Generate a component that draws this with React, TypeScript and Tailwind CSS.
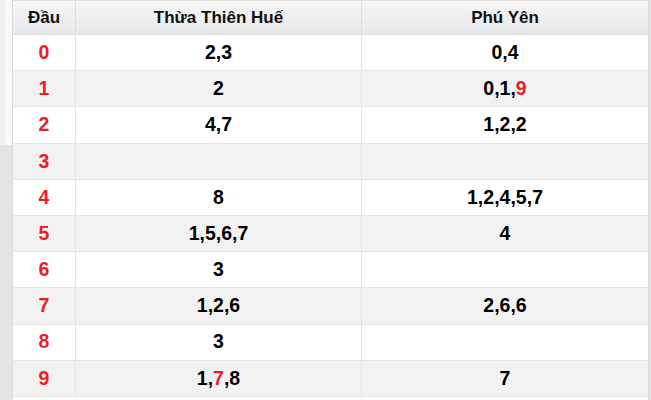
import React from "react";

type Cell = { v: string; red?: boolean };
type Row = { d: string; a: Cell[]; b: Cell[] };

const nums = (s: string, redIdx: number[] = []): Cell[] =>
  s === "" ? [] : s.split(",").map((v, i) => ({ v, red: redIdx.includes(i) }));

const rows: Row[] = [
  { d: "0", a: nums("2,3"), b: nums("0,4") },
  { d: "1", a: nums("2"), b: nums("0,1,9", [2]) },
  { d: "2", a: nums("4,7"), b: nums("1,2,2") },
  { d: "3", a: nums(""), b: nums("") },
  { d: "4", a: nums("8"), b: nums("1,2,4,5,7") },
  { d: "5", a: nums("1,5,6,7"), b: nums("4") },
  { d: "6", a: nums("3"), b: nums("") },
  { d: "7", a: nums("1,2,6"), b: nums("2,6,6") },
  { d: "8", a: nums("3"), b: nums("") },
  { d: "9", a: nums("1,7,8", [1]), b: nums("7") },
];

function Nums({ cells }: { cells: Cell[] }) {
  return (
    <span>
      {cells.map((c, i) => (
        <React.Fragment key={i}>
          {i > 0 && ","}
          <span className={c.red ? "text-[#ee1c25]" : ""}>{c.v}</span>
        </React.Fragment>
      ))}
    </span>
  );
}

export default function App() {
  return (
    <div
      className="w-[651px] h-[400px] flex bg-white overflow-hidden"
      style={{ fontFamily: '"Liberation Sans", Arial, sans-serif' }}
    >
      {/* left strip */}
      <div className="w-[12px] flex flex-col shrink-0">
        <div className="h-[145px] flex">
          <div className="w-[5px] bg-[#f1f1f1]" />
          <div className="flex-1 bg-[#f8f8f8]" />
        </div>
        <div className="flex-1 bg-[#e3e4e6]" />
      </div>

      {/* table */}
      <div className="w-[636px] shrink-0 flex flex-col border-l border-[#dcdcdc] bg-white">
        <div className="grid grid-cols-[63px_286px_286px] h-[35px] border-t border-b border-[#e2dfdb] bg-gradient-to-b from-[#f6f6f6] to-[#e7e8e9] text-[17px] font-bold text-[#111]">
          <div className="flex items-center justify-center border-r border-[#e0ddd9]">Đầu</div>
          <div className="flex items-center justify-center border-r border-[#e0ddd9]">Thừa Thiên Huế</div>
          <div className="flex items-center justify-center">Phú Yên</div>
        </div>
        {rows.map((r, i) => (
          <div
            key={r.d}
            className={
              "grid grid-cols-[63px_286px_286px] h-[36.2px] border-b border-[#e8e4df] text-[19.5px] font-bold text-black " +
              (i % 2 === 1 ? "bg-[#f2f2f2]" : "bg-white")
            }
          >
            <div className="flex items-center justify-center border-r border-[#e8e4df] text-[#ee1c25]">
              {r.d}
            </div>
            <div className="flex items-center justify-center border-r border-[#e8e4df]">
              <Nums cells={r.a} />
            </div>
            <div className="flex items-center justify-center">
              <Nums cells={r.b} />
            </div>
          </div>
        ))}
        <div className="flex-1 bg-white" />
      </div>

      {/* right strip */}
      <div className="flex-1 border-l border-[#d9d9d9] bg-[#e3e3e3]" />
    </div>
  );
}
